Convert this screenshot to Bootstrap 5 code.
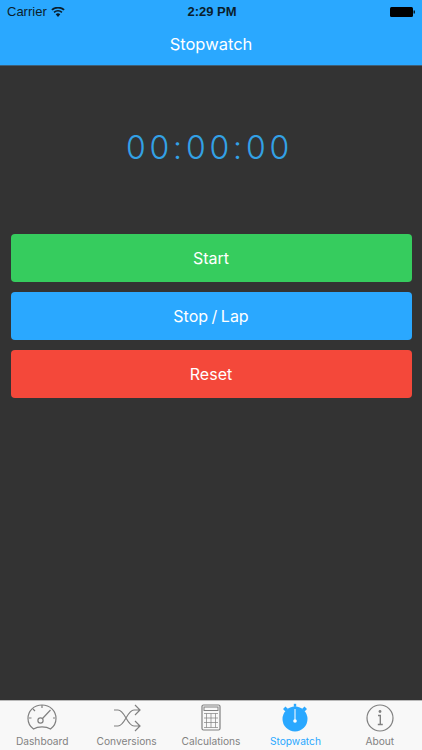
<!DOCTYPE html>
<html lang="en">
<head>
<meta charset="utf-8">
<title>Stopwatch</title>
<link rel="stylesheet" href="https://cdn.jsdelivr.net/npm/bootstrap@5.3.0/dist/css/bootstrap.min.css">
<style>
html,body{height:100%;}
body{font-family:"Liberation Sans",Arial,sans-serif;background:#333333;overflow:hidden;}
.app-shell{width:422px;height:750px;}
.top-area{background:#2aa8ff;height:66px;border-bottom:1px solid #3d5f78;}
.status-row{height:22px;padding:1px 7px 0 7px;font-size:13px;color:#0a1e2c;}
.clock-txt{font-weight:700;font-size:13px;margin-left:2px;}
.title-row{height:43px;color:#fff;font-family:Inter,"Liberation Sans",sans-serif;font-size:16.5px;font-weight:400;padding-top:2px;}
.side-cell{flex:1 1 0;}
.main-area{background:#333333;padding:0 10.5px;}
.timer-txt{height:168px;padding-bottom:4px;color:#33a1e6;font-family:Inter,"Liberation Sans",sans-serif;font-weight:300;font-size:32px;letter-spacing:3.8px;padding-left:0;padding-right:3px;}
.action-btn{height:47.5px;border:0;border-radius:4px;color:#fff;font-family:Inter,"Liberation Sans",sans-serif;font-size:16px;padding:0;word-spacing:-1px;}
.action-btn:hover,.action-btn:active{color:#fff;}
.go-btn,.go-btn:hover{background:#36cc5e;}
.lap-btn,.lap-btn:hover{background:#2aa8ff;}
.clear-btn,.clear-btn:hover{background:#f4483a;}
.btn-stack{gap:10.5px;}
.tab-strip{height:50px;background:#f8f8f8;border-top:1px solid #b9b9b9;}
.tab-cell{flex:1 1 0;color:#828282;font-family:Inter,"Liberation Sans",sans-serif;font-size:10.2px;line-height:12px;padding-top:2px;}
.tab-cell svg{display:block;height:30px;width:30px;margin-bottom:2px;}
.tab-on{color:#2aa8ff;}
</style>
</head>
<body>
<div class="app-shell d-flex flex-column">
  <header class="top-area flex-shrink-0">
    <div class="status-row d-flex align-items-center">
      <div class="side-cell d-flex align-items-center gap-1">
        <span>Carrier</span>
        <svg width="14" height="10" viewBox="0 0 14 10" aria-hidden="true"><path d="M7 10 4.7 7.2a3.6 3.6 0 0 1 4.6 0zM3.6 6 2.5 4.7a7 7 0 0 1 9 0L10.4 6a5.3 5.3 0 0 0-6.8 0zM1.5 3.5.3 2.2a10.4 10.4 0 0 1 13.4 0l-1.2 1.3a8.6 8.6 0 0 0-11 0z" fill="#0a1e2c"/></svg>
      </div>
      <span class="clock-txt">2:29 PM</span>
      <div class="side-cell d-flex justify-content-end">
        <svg width="25" height="10" viewBox="0 0 25 10" aria-hidden="true"><rect x="0" y="0" width="23" height="10" rx="1.5" fill="#000"/><rect x="23.5" y="3.5" width="1.5" height="3" fill="#0a1e2c"/></svg>
      </div>
    </div>
    <div class="title-row d-flex align-items-center justify-content-center">Stopwatch</div>
  </header>
  <main class="main-area flex-grow-1">
    <div class="timer-txt d-flex align-items-center justify-content-center">00:00:00</div>
    <div class="btn-stack d-flex flex-column">
      <button type="button" class="btn action-btn go-btn w-100">Start</button>
      <button type="button" class="btn action-btn lap-btn w-100">Stop / Lap</button>
      <button type="button" class="btn action-btn clear-btn w-100">Reset</button>
    </div>
  </main>
  <nav class="tab-strip d-flex flex-shrink-0">
    <div class="tab-cell d-flex flex-column align-items-center">
      <svg viewBox="0 0 30 30" fill="none" stroke="#808080" stroke-width="1.2"><path d="M6.500 26C3 23.500 1 20 1 15.500 1 8 7 2 15 2s14 6 14 13.500c0 4.500-2 8-5.500 10.500-2.300-1.500-5-2.200-8.500-2.200s-6.200.7-8.500 2.200z"/><circle cx="13.500" cy="17.500" r="2.600"/><path d="M15.500 15.500 23.500 7M15 2v3M6 6l2 2M2 15h2.500M26 15h2"/></svg>
      <span>Dashboard</span>
    </div>
    <div class="tab-cell d-flex flex-column align-items-center">
      <svg viewBox="0 0 30 30" fill="none" stroke="#808080" stroke-width="1.2"><path d="M2 7h4c7 0 9 16 16 16h6M2 23h4c7 0 9-16 16-16h6M23 2l5 5-5 5M23 18l5 5-5 5"/></svg>
      <span>Conversions</span>
    </div>
    <div class="tab-cell d-flex flex-column align-items-center">
      <svg viewBox="0 0 30 30" fill="none" stroke="#808080" stroke-width="1.2"><rect x="6" y="2" width="18" height="25" rx="1.500"/><rect x="8" y="4" width="14" height="3.500" stroke-width="1"/><path d="M8 10.500h14M8 15h14M8 19.500h14M8 24.500h14M10.500 10.500v14M15 10.500v14M19.500 10.500v14" stroke-width=".7"/></svg>
      <span>Calculations</span>
    </div>
    <div class="tab-cell tab-on d-flex flex-column align-items-center">
      <svg viewBox="0 0 30 30"><circle cx="15" cy="16" r="12.500" fill="#2aa8ff"/><rect x="13.800" y="0.800" width="2.400" height="3" fill="#2aa8ff"/><path d="M3 6 5.500 3.500 8 6 5.500 8.500zM22 6 24.500 3.500 27 6 24.500 8.500z" fill="#2aa8ff"/><path d="M15 6v11" stroke="#fff" stroke-width="1"/><circle cx="15" cy="18" r="1.800" fill="#fff"/></svg>
      <span>Stopwatch</span>
    </div>
    <div class="tab-cell d-flex flex-column align-items-center">
      <svg viewBox="0 0 30 30" fill="none" stroke="#808080" stroke-width="1.2"><circle cx="15" cy="15" r="13"/><circle cx="15" cy="8.500" r="1.400" fill="#808080" stroke="none"/><path d="M13 12.500h2.300v9M12.800 21.500h5" stroke-width="1.400"/></svg>
      <span>About</span>
    </div>
  </nav>
</div>
<script src="https://cdn.jsdelivr.net/npm/bootstrap@5.3.0/dist/js/bootstrap.bundle.min.js"></script>
</body>
</html>
